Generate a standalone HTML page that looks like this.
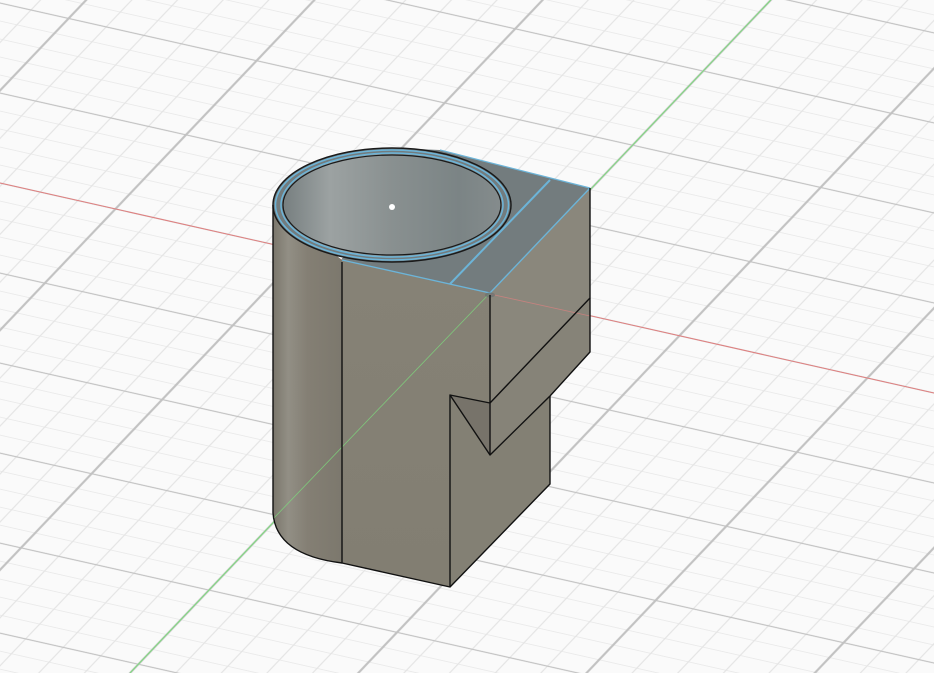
<!DOCTYPE html>
<html><head><meta charset="utf-8"><style>html,body{margin:0;padding:0;background:#fafafa;overflow:hidden;width:934px;height:673px}svg{display:block;overflow:hidden}</style></head><body>
<svg width="934" height="673" viewBox="0 0 934 673" xmlns="http://www.w3.org/2000/svg">
<defs>
<pattern id="minor" patternUnits="userSpaceOnUse" width="100" height="100" patternTransform="matrix(0.376 0.0845 -0.1412 0.1483 491.4 293.5)">
<rect x="0" y="0" width="100" height="100" fill="none" stroke="#e4e4e4" stroke-width="3.5"/>
</pattern>
<pattern id="major" patternUnits="userSpaceOnUse" width="100" height="100" patternTransform="matrix(1.88 0.4225 -0.706 0.7415 491.4 293.5)">
<rect x="0" y="0" width="100" height="100" fill="none" stroke="#c2c2c2" stroke-width="1.3"/>
</pattern>
<linearGradient id="cyl" x1="0" x2="1" y1="0" y2="0">
<stop offset="0" stop-color="#7a766b"/><stop offset="0.22" stop-color="#928f85"/><stop offset="0.5" stop-color="#847f74"/><stop offset="1" stop-color="#7c786d"/>
</linearGradient>
<linearGradient id="bore" x1="0" x2="1" y1="0" y2="0">
<stop offset="0" stop-color="#757d7e"/><stop offset="0.22" stop-color="#9ca2a2"/><stop offset="0.5" stop-color="#899090"/><stop offset="0.8" stop-color="#7b8485"/><stop offset="1" stop-color="#858c8d"/>
</linearGradient>
<linearGradient id="front" x1="0" x2="0" y1="0" y2="1">
<stop offset="0" stop-color="#868276"/><stop offset="1" stop-color="#827e72"/>
</linearGradient>
</defs>
<rect width="934" height="673" fill="#fafafa"/>
<rect width="934" height="673" fill="url(#minor)"/>
<rect width="934" height="673" fill="url(#major)"/>
<line x1="0" y1="183" x2="934" y2="393" stroke="#e08080" stroke-width="1"/>
<line x1="130" y1="673" x2="770.8" y2="0" stroke="#7ddc7d" stroke-width="1"/>

<path d="M273,205 L273,513 Q276,555 342,563 L342,260 Z" fill="url(#cyl)"/>
<path d="M342,258 L490,293 L490,403 L450,395 L450,587 L342,563 Z" fill="url(#front)"/>
<path d="M450,395 L490,403 L490,455 Z" fill="#77736a"/>
<path d="M490,293 L590,188 L590,298 L490,403 Z" fill="#8a877c"/>
<path d="M490,403 L590,298 L590,352 L550,396 L490,455 Z" fill="#868378"/>
<path d="M450,395 L490,455 L550,396 L550,484 L450,587 Z" fill="#838074"/>
<line x1="273" y1="519" x2="490" y2="293" stroke="#7ddc7d" stroke-width="0.8" opacity="0.8"/>
<line x1="490" y1="294" x2="590" y2="316" stroke="#e08080" stroke-width="0.8" opacity="0.7"/>
<ellipse cx="392" cy="205" rx="119" ry="57" fill="#737c7e"/>
<path d="M342,260 L490,293 L590,188 L440,150 L392,148 Z" fill="#737c7e"/>
<ellipse cx="392" cy="205" rx="119" ry="57" fill="none" stroke="#1a1a1a" stroke-width="1.5"/>
<ellipse cx="392" cy="205" rx="116.5" ry="55" fill="none" stroke="#6cb4d8" stroke-width="1.5"/>
<ellipse cx="392" cy="205" rx="111" ry="52" fill="url(#bore)" stroke="#6cb4d8" stroke-width="1.5"/>
<ellipse cx="392" cy="205" rx="109" ry="50" fill="none" stroke="#1a1a1a" stroke-width="1.2"/>
<circle cx="392" cy="207" r="3" fill="#fff"/>
<line x1="450" y1="284" x2="550" y2="180" stroke="#6cb4d8" stroke-width="2"/>
<path d="M342,260 L490,293 L590,188" fill="none" stroke="#6cb4d8" stroke-width="1.4"/>
<line x1="440" y1="150" x2="590" y2="188" stroke="#6cb4d8" stroke-width="1.2"/>
<ellipse cx="490" cy="295" rx="5" ry="2.5" fill="#6a7070" opacity="0.7"/>
<g fill="none" stroke="#111" stroke-width="1.4" stroke-linejoin="round">
<path d="M273,205 L273,513 Q276,555 342,563 L450,587 L550,484 L550,396"/>
<line x1="342" y1="262" x2="342" y2="563"/>
<path d="M450,587 L450,395 L490,403 L490,295"/>
<path d="M450,395 L490,455 L550,396"/>
<path d="M590,188 L590,298 L490,403 L490,455"/>
<path d="M590,298 L590,352 L550,396"/>
</g>
</svg>
</body></html>
